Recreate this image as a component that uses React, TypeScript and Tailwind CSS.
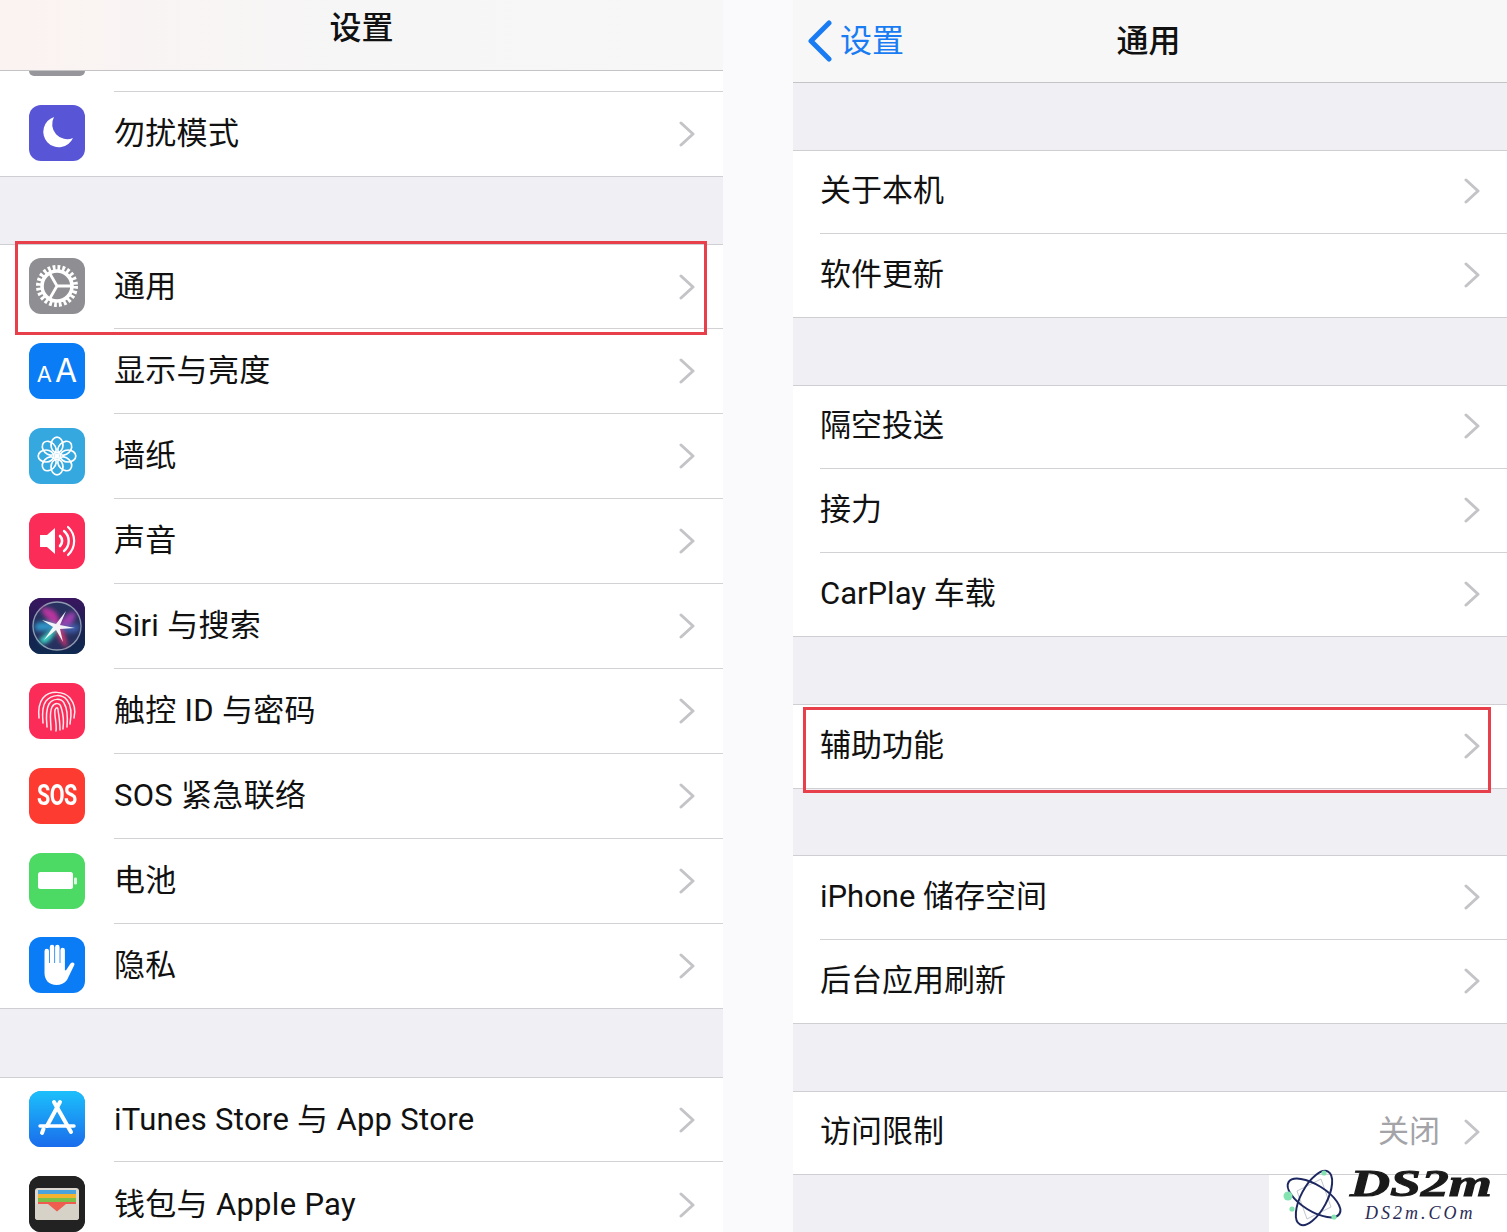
import React from "react";

const font = { fontFamily: '"Roboto", "Noto Sans CJK SC", sans-serif' };

function Chevron() {
  return (
    <svg width="16" height="26" viewBox="0 0 16 26" fill="none" className="shrink-0">
      <path d="M2 2 L14 13 L2 24" stroke="#c4c4c8" strokeWidth="3" strokeLinecap="round" strokeLinejoin="round" />
    </svg>
  );
}

function Moon() {
  return (
    <svg viewBox="0 0 56 56" className="w-14 h-14">
      <path d="M25 12 A 15.5 15.5 0 1 0 44 33 A 15 15 0 0 1 25 12 Z" fill="#fff" />
    </svg>
  );
}

function Gear() {
  return (
    <svg viewBox="0 0 56 56" className="w-14 h-14" fill="none" stroke="#fff">
      <circle cx="28" cy="28" r="18.5" strokeWidth="5" strokeDasharray="2.75 2.09" />
      <circle cx="28" cy="28" r="15" strokeWidth="3.6" />
      <path d="M28 28 H43 M28 28 L20.5 15 M28 28 L20.5 41" strokeWidth="2.8" />
    </svg>
  );
}

function Flower() {
  const a = [0, 45, 90, 135, 180, 225, 270, 315];
  return (
    <svg viewBox="0 0 56 56" className="w-14 h-14" fill="none" stroke="#fff" strokeWidth="1.7">
      {a.map((r) => (
        <ellipse key={r} cx="28" cy="17" rx="6" ry="7.8" transform={`rotate(${r} 28 28)`} />
      ))}
      <circle cx="28" cy="28" r="2.6" fill="#fff" stroke="none" />
    </svg>
  );
}

function Speaker() {
  return (
    <svg viewBox="0 0 56 56" className="w-14 h-14" fill="none" stroke="#fff" strokeLinecap="round">
      <path d="M11 22 H18 L26 15 V41 L18 34 H11 Z" fill="#fff" stroke="none" />
      <path d="M31 23 A 7 7 0 0 1 31 33" strokeWidth="2.6" />
      <path d="M35 18 A 13 13 0 0 1 35 38" strokeWidth="2.4" />
      <path d="M39 14 A 19 19 0 0 1 39 42" strokeWidth="2.2" />
    </svg>
  );
}

function Siri() {
  return (
    <svg viewBox="0 0 56 56" className="w-14 h-14">
      <defs>
        <linearGradient id="sb" x1="0" y1="0" x2="0" y2="1">
          <stop offset="0" stopColor="#3a1660" />
          <stop offset="0.6" stopColor="#18214f" />
          <stop offset="1" stopColor="#0f2a50" />
        </linearGradient>
        <filter id="b1" x="-30%" y="-30%" width="160%" height="160%">
          <feGaussianBlur stdDeviation="2.2" />
        </filter>
        <filter id="b2" x="-30%" y="-30%" width="160%" height="160%">
          <feGaussianBlur stdDeviation="0.6" />
        </filter>
      </defs>
      <rect width="56" height="56" fill="url(#sb)" />
      <circle cx="28" cy="28" r="24" fill="#27315f" stroke="#8f9bb0" strokeWidth="1.4" />
      <g filter="url(#b1)">
        <path d="M12 10 C 24 8 32 16 30 28 C 22 24 14 20 12 10 Z" fill="#b7369f" />
        <path d="M46 14 C 48 24 40 30 29 28 C 34 20 38 14 46 14 Z" fill="#9b3fb0" />
        <path d="M50 32 C 42 38 34 34 28 28 L 50 26 Z" fill="#3d5ca8" />
        <path d="M28 28 C 36 32 38 42 38 50 C 32 46 27 38 28 28 Z" fill="#c8346f" />
        <path d="M6 26 C 14 22 24 24 28 28 C 20 34 12 34 6 32 Z" fill="#2f93c4" />
        <path d="M10 42 C 16 36 24 32 28 28 C 26 36 22 44 14 46 Z" fill="#3fd9c8" />
      </g>
      <path d="M13 22 L27 26 L37 13 L31 27 L46 30 L31 31 L34 44 L27 32 L15 42 L24 29 Z" fill="#fff" opacity="0.92" filter="url(#b2)" />
    </svg>
  );
}

function Finger() {
  return (
    <svg viewBox="0 0 56 56" className="w-14 h-14" fill="none" stroke="#fff" strokeWidth="1.5" strokeLinecap="round" opacity="0.9">
      <path d="M10 35 C 9 26 10 20 14 15 C 21 7 35 8 41 15 C 45 20 47 27 45 35" />
      <path d="M14 40 C 13 30 13 23 17 18 C 23 11 33 11 38 17 C 42 22 43 30 41 41" />
      <path d="M18 44 C 17 34 17 26 20 21 C 24 15 32 15 35 20 C 38 25 39 33 38 44" />
      <path d="M22 47 C 22 38 20 30 23 24 C 26 19 31 20 32 24 C 34 30 35 38 34 46" />
      <path d="M27 48 C 28 40 25 32 26 27 C 27 24 29 24 29 27 C 30 33 31 40 31 47" />
    </svg>
  );
}

function Battery() {
  return (
    <svg viewBox="0 0 56 56" className="w-14 h-14">
      <rect x="9" y="19" width="35" height="17" rx="2.5" fill="#fff" />
      <rect x="45" y="24.5" width="3" height="7" rx="1.2" fill="#fff" opacity="0.8" />
    </svg>
  );
}

function Hand() {
  return (
    <svg viewBox="0 0 56 56" className="w-14 h-14">
      <path
        d="M15.5 14 a2.25 2.25 0 0 1 4.5 0 V26 h.8 V10 a2.25 2.25 0 0 1 4.5 0 V26 h.8 V10 a2.25 2.25 0 0 1 4.5 0 V26 h.8 V13 a2.25 2.25 0 0 1 4.5 0 V33 l1 .6 L41.5 26.5 c1.8-2 4.8-.6 3.8 1.6 L38 43 C35.5 46.5 31.5 48 27.5 48 C20 48 15.5 43 15.5 36 Z"
        fill="#fff"
      />
    </svg>
  );
}

function AppStore() {
  return (
    <svg viewBox="0 0 56 56" className="w-14 h-14">
      <defs>
        <linearGradient id="ap" x1="0" y1="0" x2="0" y2="1">
          <stop offset="0" stopColor="#1cc0fb" />
          <stop offset="1" stopColor="#1a6cec" />
        </linearGradient>
      </defs>
      <rect width="56" height="56" fill="url(#ap)" />
      <g stroke="#fff" strokeWidth="4" strokeLinecap="round" fill="none">
        <path d="M11 35 H45" strokeWidth="3.4" />
        <path d="M31 11 L18 35" />
        <path d="M25 11 L42 41" />
        <path d="M14.5 38 L13 42" />
      </g>
    </svg>
  );
}

function Wallet() {
  return (
    <svg viewBox="0 0 56 56" className="w-14 h-14">
      <rect width="56" height="56" fill="#222222" />
      <rect x="6" y="12" width="44" height="32" rx="3" fill="#dcd8cf" />
      <rect x="9" y="14" width="38" height="4" fill="#4aa3dc" />
      <rect x="9" y="18" width="38" height="4" fill="#f3b32f" />
      <rect x="9" y="22" width="38" height="4" fill="#7cc04a" />
      <rect x="9" y="26" width="38" height="3" fill="#ef5b4e" />
      <path d="M6 28 H20 L28 35 L36 28 H50 V41 a3 3 0 0 1 -3 3 H9 a3 3 0 0 1 -3 -3 Z" fill="#d6d2c7" />
      <path d="M19 28 H37 L28 35.5 Z" fill="#ee5f50" />
    </svg>
  );
}

function Tile({ bg, children }: { bg: string; children?: React.ReactNode }) {
  return <div className={`w-14 h-14 mb-[2px] rounded-[12px] overflow-hidden shrink-0 flex items-center justify-center ${bg}`}>{children}</div>;
}

function SettingsRow({
  icon,
  label,
  h,
  sep,
}: {
  icon: React.ReactNode;
  label: string;
  h: string;
  sep: boolean;
}) {
  return (
    <div className={`flex items-center pl-[29px] bg-white ${h}`}>
      {icon}
      <div className={`ml-[29px] flex-1 h-full flex items-center pr-[28px] ${sep ? "border-b border-[#d2d2d5]" : ""}`}>
        <span className="flex-1 mb-[1px] text-[31px] leading-none tracking-[0.3px] text-[#111]">{label}</span>
        <Chevron />
      </div>
    </div>
  );
}

function Group({ items }: { items: { label: string; h: string; value?: string }[] }) {
  return (
    <div className="border-t border-[#cfcfd3]">
      {items.map((it, i) => {
        const last = i === items.length - 1;
        return (
          <div key={it.label} className={`pl-[27px] bg-white ${it.h} ${last ? "border-b border-[#cfcfd3]" : ""}`}>
            <div className={`h-full flex items-center pr-[27px] ${last ? "" : "border-b border-[#d2d2d5]"}`}>
              <span className="flex-1 mb-[3px] text-[31px] leading-none text-[#111]">{it.label}</span>
              {it.value && <span className="mr-[24px] mb-[3px] text-[31px] leading-none text-[#a3a3a8]">{it.value}</span>}
              <div className="mb-[2px] flex">
                <Chevron />
              </div>
            </div>
          </div>
        );
      })}
    </div>
  );
}

function Logo() {
  return (
    <svg width="62" height="62" viewBox="0 0 62 62" fill="none" className="shrink-0">
      <path d="M14 24 L38 12 L48 40 L24 52 Z" stroke="#c2c6ce" strokeWidth="1" />
      <ellipse cx="31" cy="31" rx="30" ry="13" transform="rotate(32 31 31)" stroke="#1d2760" strokeWidth="2" />
      <ellipse cx="31" cy="31" rx="30" ry="13" transform="rotate(-62 31 31)" stroke="#1d2760" strokeWidth="2" />
      <circle cx="5" cy="29" r="4.5" fill="#84e3b0" />
      <circle cx="9" cy="42" r="2.6" fill="#84e3b0" />
      <circle cx="41" cy="6" r="2.6" fill="#84e3b0" />
      <circle cx="51" cy="50" r="2.6" fill="#84e3b0" />
    </svg>
  );
}

export default function App() {
  return (
    <div className="relative w-[1507px] h-[1232px] overflow-hidden flex bg-[#fafafd]" style={font}>
      {/* Left panel */}
      <div className="w-[723px] h-full bg-[#efeff4] overflow-hidden">
        <div className="h-[71px] pb-[15px] flex items-center justify-center border-b border-[#c4c4c7] bg-linear-to-r from-[#fbf3f2] via-[#f6f6f6] to-[#f7f7f7]">
          <span className="text-[32px] leading-none font-medium text-[#111]">设置</span>
        </div>
        <div className="h-[21px] bg-white pl-[29px] flex">
          <div className="w-14 h-[5px] rounded-b-[5px] bg-[#97979b]" />
          <div className="ml-[29px] flex-1 border-b border-[#d2d2d5]" />
        </div>
        <div className="border-b border-[#cfcfd3]">
          <SettingsRow h="h-[84px]" sep={false} label="勿扰模式" icon={<Tile bg="bg-[#5856d6]"><Moon /></Tile>} />
        </div>
        <div className="h-[67px]" />
        <div className="border-t border-b border-[#cfcfd3]">
          <SettingsRow h="h-[84px]" sep label="通用" icon={<Tile bg="bg-[#8e8e93]"><Gear /></Tile>} />
          <SettingsRow h="h-[85px]" sep label="显示与亮度" icon={
            <Tile bg="bg-[#0a7cf6]">
              <span className="text-white leading-none flex items-baseline gap-[3px]" style={{ fontFamily: '"Inter", sans-serif' }}>
                <span className="text-[22px]">A</span>
                <span className="text-[32px]">A</span>
              </span>
            </Tile>
          } />
          <SettingsRow h="h-[85px]" sep label="墙纸" icon={<Tile bg="bg-[#35a8df]"><Flower /></Tile>} />
          <SettingsRow h="h-[85px]" sep label="声音" icon={<Tile bg="bg-[#fb2c58]"><Speaker /></Tile>} />
          <SettingsRow h="h-[85px]" sep label="Siri 与搜索" icon={<Tile bg="bg-[#1a1f4d]"><Siri /></Tile>} />
          <SettingsRow h="h-[85px]" sep label="触控 ID 与密码" icon={<Tile bg="bg-[#fb2c58]"><Finger /></Tile>} />
          <SettingsRow h="h-[85px]" sep label="SOS 紧急联络" icon={
            <Tile bg="bg-[#fd3b30]">
              <span className="text-white text-[29px] font-bold leading-none scale-x-[0.74] tracking-tight" style={{ fontFamily: '"Roboto", sans-serif' }}>SOS</span>
            </Tile>
          } />
          <SettingsRow h="h-[85px]" sep label="电池" icon={<Tile bg="bg-[#4cd964]"><Battery /></Tile>} />
          <SettingsRow h="h-[84px]" sep={false} label="隐私" icon={<Tile bg="bg-[#0a7cf6]"><Hand /></Tile>} />
        </div>
        <div className="h-[68px]" />
        <div className="border-t border-[#cfcfd3]">
          <SettingsRow h="h-[84px]" sep label="iTunes Store 与 App Store" icon={<Tile bg="bg-[#1a8cf3]"><AppStore /></Tile>} />
          <SettingsRow h="h-[85px]" sep={false} label="钱包与 Apple Pay" icon={<Tile bg="bg-[#222]"><Wallet /></Tile>} />
        </div>
      </div>

      {/* Right panel */}
      <div className="ml-[70px] flex-1 h-full bg-[#efeff4] overflow-hidden">
        <div className="relative h-[83px] flex items-center justify-center bg-[#f7f7f8] border-b border-[#c4c4c7]">
          <div className="absolute left-[14px] top-[20px] flex items-center gap-[7px]">
            <svg width="26" height="42" viewBox="0 0 26 42" fill="none">
              <path d="M22 3 L4 21 L22 39" stroke="#1a7cf2" strokeWidth="5" strokeLinecap="round" strokeLinejoin="round" />
            </svg>
            <span className="text-[32px] leading-none text-[#1a7cf2]">设置</span>
          </div>
          <span className="text-[32px] leading-none font-medium text-[#111] -ml-[3px]">通用</span>
        </div>
        <div className="h-[67px]" />
        <Group items={[{ label: "关于本机", h: "h-[83px]" }, { label: "软件更新", h: "h-[84px]" }]} />
        <div className="h-[67px]" />
        <Group items={[{ label: "隔空投送", h: "h-[83px]" }, { label: "接力", h: "h-[84px]" }, { label: "CarPlay 车载", h: "h-[84px]" }]} />
        <div className="h-[67px]" />
        <Group items={[{ label: "辅助功能", h: "h-[84px]" }]} />
        <div className="h-[66px]" />
        <Group items={[{ label: "iPhone 储存空间", h: "h-[84px]" }, { label: "后台应用刷新", h: "h-[84px]" }]} />
        <div className="h-[67px]" />
        <Group items={[{ label: "访问限制", value: "关闭", h: "h-[83px]" }]} />
      </div>

      {/* Red highlight boxes */}
      <div className="absolute left-[15px] top-[241px] w-[692px] h-[94px] border-[3px] border-[#e8404a]" />
      <div className="absolute left-[803px] top-[707px] w-[688px] h-[86px] border-[3px] border-[#e8404a]" />

      {/* Watermark */}
      <div className="absolute left-[1269px] top-[1175px] w-[238px] h-[57px] bg-white" />
      <div className="absolute left-[1283px] top-[1167px] flex items-start">
        <Logo />
        <div className="ml-[5px] flex flex-col items-start" style={{ fontFamily: '"Liberation Serif", serif' }}>
          <span className="text-[38px] leading-[32px] font-bold italic text-[#1a1a1a] origin-left scale-x-[1.46] [-webkit-text-stroke:1px_#1a1a1a]">DS2m</span>
          <span className="mt-[5px] ml-[15px] text-[18px] leading-none italic text-[#2b2b55] tracking-[3px]">DS2m.COm</span>
        </div>
      </div>
    </div>
  );
}
